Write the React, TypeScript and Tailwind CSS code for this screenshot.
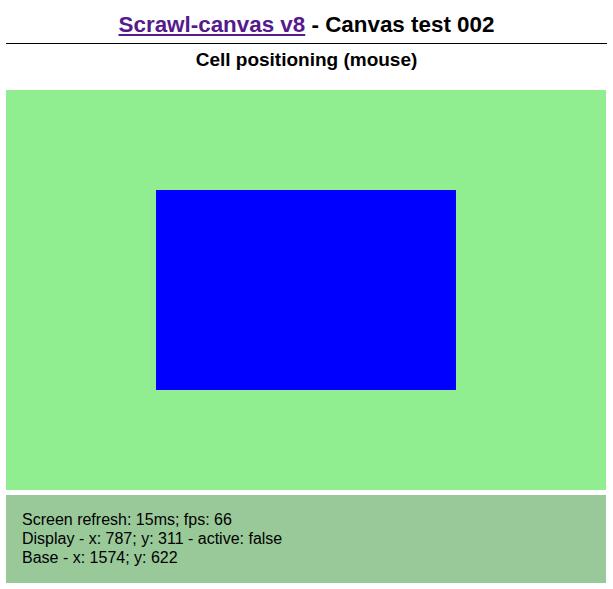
import React from 'react';

export default function App() {
  return (
    <div className="min-h-screen bg-white px-[6px] text-black" style={{ fontFamily: '"Liberation Sans", Arial, sans-serif' }}>
      {/* Header */}
      <h1 className="border-b border-black pt-[12px] pb-[6px] text-center text-[22.4px] font-bold leading-[25px]">
        <a href="#" className="text-[#551a8b] underline">Scrawl-canvas v8</a> - Canvas test 002
      </h1>
      <h2 className="mt-[5px] text-center text-[19px] font-bold leading-[21px]">Cell positioning (mouse)</h2>

      {/* Canvas */}
      <div className="mt-[20px] flex h-[400px] w-[600px] items-center justify-center bg-[#90ee90]">
        <div className="h-[200px] w-[300px] bg-[#0000ff]" />
      </div>

      {/* Report */}
      <div className="mt-[5px] w-[600px] bg-[#99c999] px-[16px] pt-[15px] pb-[16px] text-[16px] leading-[19px]">
        <div>Screen refresh: 15ms; fps: 66</div>
        <div>Display - x: 787; y: 311 - active: false</div>
        <div>Base - x: 1574; y: 622</div>
      </div>
    </div>
  );
}
